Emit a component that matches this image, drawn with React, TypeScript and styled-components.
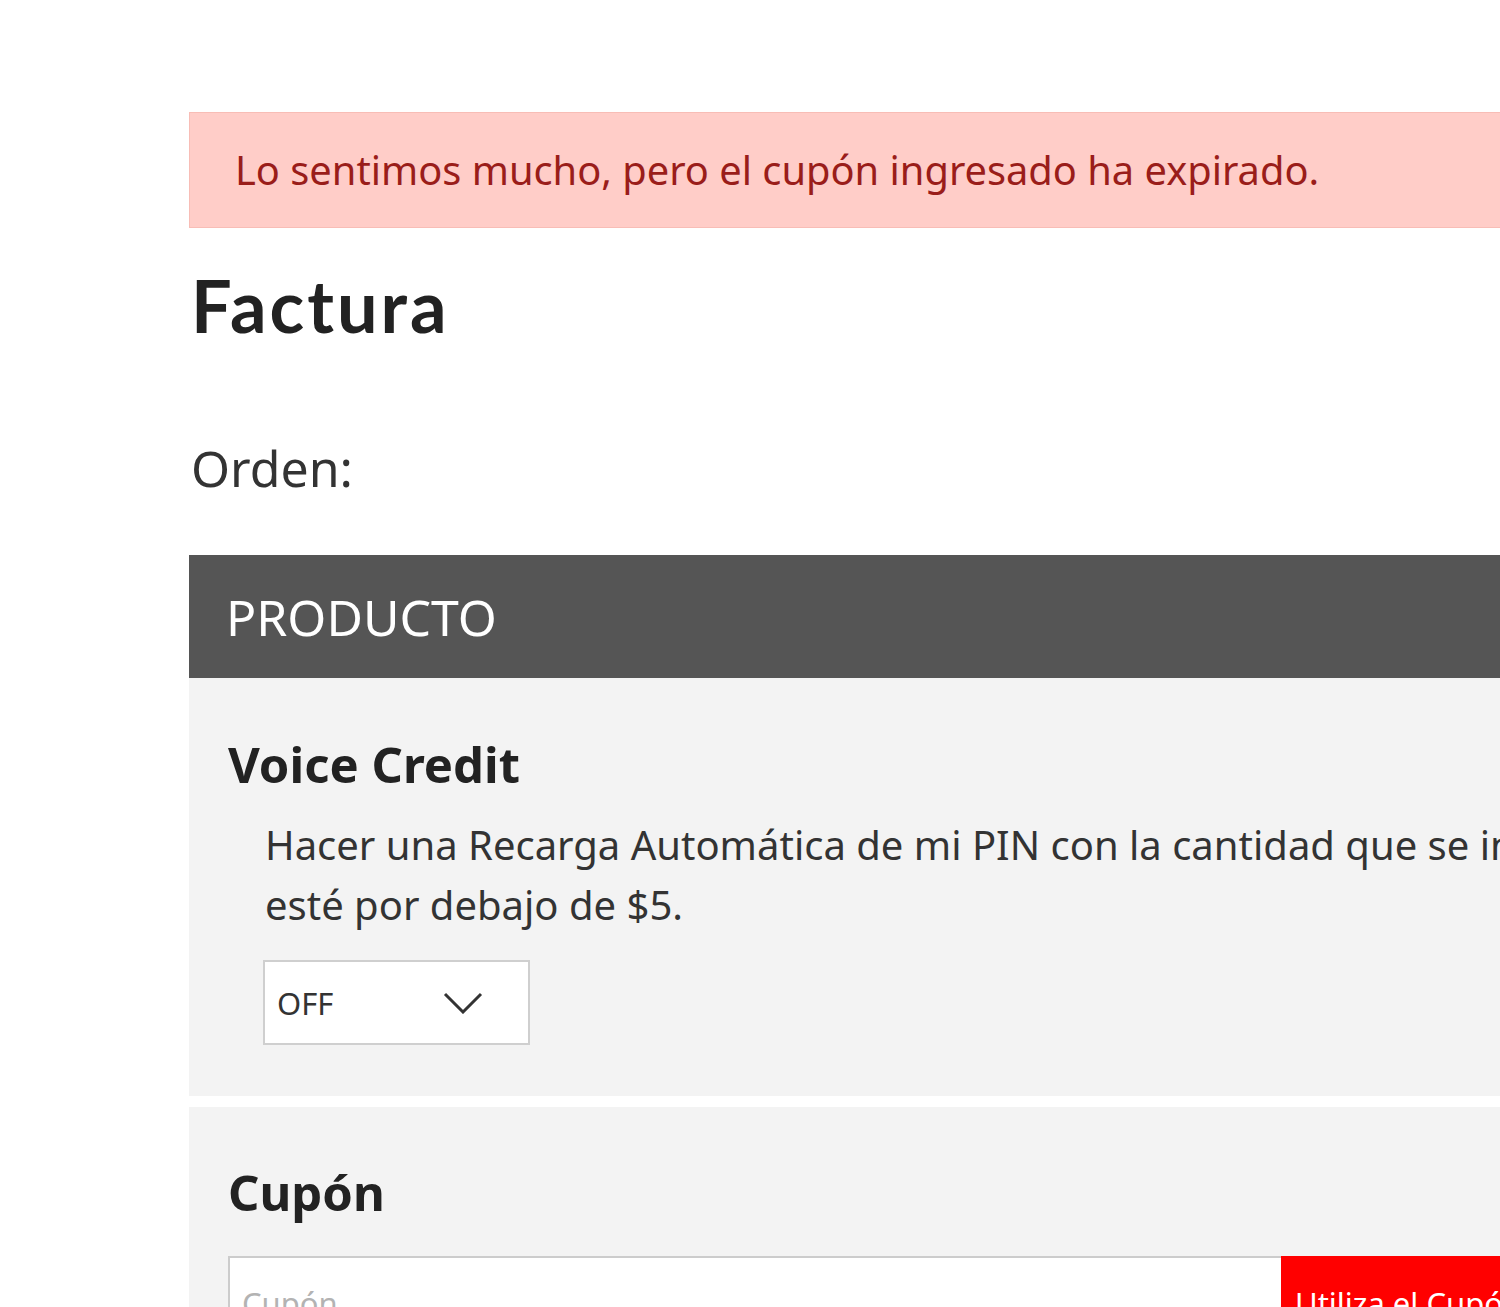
import React from "react";
import styled, { createGlobalStyle } from "styled-components";

const GlobalStyle = createGlobalStyle`
  html, body {
    margin: 0;
    padding: 0;
    background: #ffffff;
    overflow: hidden;
    font-family: "Noto Sans", "Open Sans", sans-serif;
    color: #333333;
  }
  * {
    box-sizing: border-box;
  }
`;

const Page = styled.main`
  width: 1800px;
  padding: 112px 0 0 189px;
`;

const Alert = styled.div`
  height: 116px;
  display: flex;
  align-items: center;
  padding: 0 45px;
  background: #ffcdc8;
  border: 1px solid #f8bdb6;
  color: #9a1d1a;
  font-size: 39.8px;
  line-height: 1;
  white-space: nowrap;
`;

const Title = styled.h1`
  margin: 37px 0 0 2px;
  font-family: Lato, "Noto Sans", sans-serif;
  font-size: 72px;
  line-height: 80px;
  font-weight: 700;
  letter-spacing: 3px;
  color: #222222;
`;

const OrderLabel = styled.h3`
  margin: 95px 0 0 2px;
  font-size: 50px;
  line-height: 56px;
  font-weight: 400;
  color: #333333;
`;

const TableHead = styled.div`
  margin-top: 59px;
  height: 123px;
  display: flex;
  align-items: center;
  padding-left: 37px;
  background: #555555;
  color: #ffffff;
  font-size: 50px;
  line-height: 1;
`;

const Section = styled.section<{ $top: number; $bottom: number }>`
  background: #f3f3f3;
  padding: ${({ $top }) => $top}px 0 ${({ $bottom }) => $bottom}px 39px;
  & + & {
    margin-top: 11px;
  }
`;

const ItemTitle = styled.h4`
  margin: 0;
  font-size: 49px;
  line-height: 56px;
  font-weight: 700;
  color: #222222;
`;

const Description = styled.p`
  margin: 23px 0 0 37px;
  font-size: 40px;
  line-height: 60px;
  color: #333333;
  white-space: nowrap;
`;

const SelectBox = styled.div`
  margin: 25px 0 0 35px;
  width: 267px;
  height: 85px;
  display: flex;
  align-items: center;
  justify-content: space-between;
  padding: 0 45px 0 12px;
  background: #ffffff;
  border: 2px solid #cfcfcf;
  font-size: 31px;
  color: #333333;
`;

const CouponRow = styled.div`
  margin-top: 36px;
  display: flex;
  height: 90px;
`;

const CouponInput = styled.input`
  width: 1053px;
  height: 100%;
  padding: 4px 12px 0;
  border: 2px solid #cccccc;
  border-right: none;
  background: #ffffff;
  font-family: inherit;
  font-size: 31px;
  color: #333333;
  &::placeholder {
    color: #b3b3b3;
  }
`;

const CouponButton = styled.button`
  width: 400px;
  height: 100%;
  padding: 4px 14px 0;
  border: none;
  background: #ff0000;
  color: #ffffff;
  font-family: inherit;
  font-size: 31px;
  text-align: left;
  white-space: nowrap;
`;

function Chevron(): React.ReactElement {
  return (
    <svg width="40" height="22" viewBox="0 0 40 22" fill="none">
      <path d="M2 2 L20 20 L38 2" stroke="#333333" strokeWidth="3" />
    </svg>
  );
}

export default function App(): React.ReactElement {
  return (
    <>
      <GlobalStyle />
      <Page>
        <Alert>Lo sentimos mucho, pero el cupón ingresado ha expirado.</Alert>
        <Title>Factura</Title>
        <OrderLabel>Orden:</OrderLabel>
        <TableHead>PRODUCTO</TableHead>
        <Section $top={58} $bottom={51}>
          <ItemTitle>Voice Credit</ItemTitle>
          <Description>
            Hacer una Recarga Automática de mi PIN con la cantidad que se indica
            cuando mi saldo
            <br />
            esté por debajo de $5.
          </Description>
          <SelectBox>
            <span>OFF</span>
            <Chevron />
          </SelectBox>
        </Section>
        <Section $top={57} $bottom={40}>
          <ItemTitle>Cupón</ItemTitle>
          <CouponRow>
            <CouponInput placeholder="Cupón" />
            <CouponButton>Utiliza el Cupón</CouponButton>
          </CouponRow>
        </Section>
      </Page>
    </>
  );
}
